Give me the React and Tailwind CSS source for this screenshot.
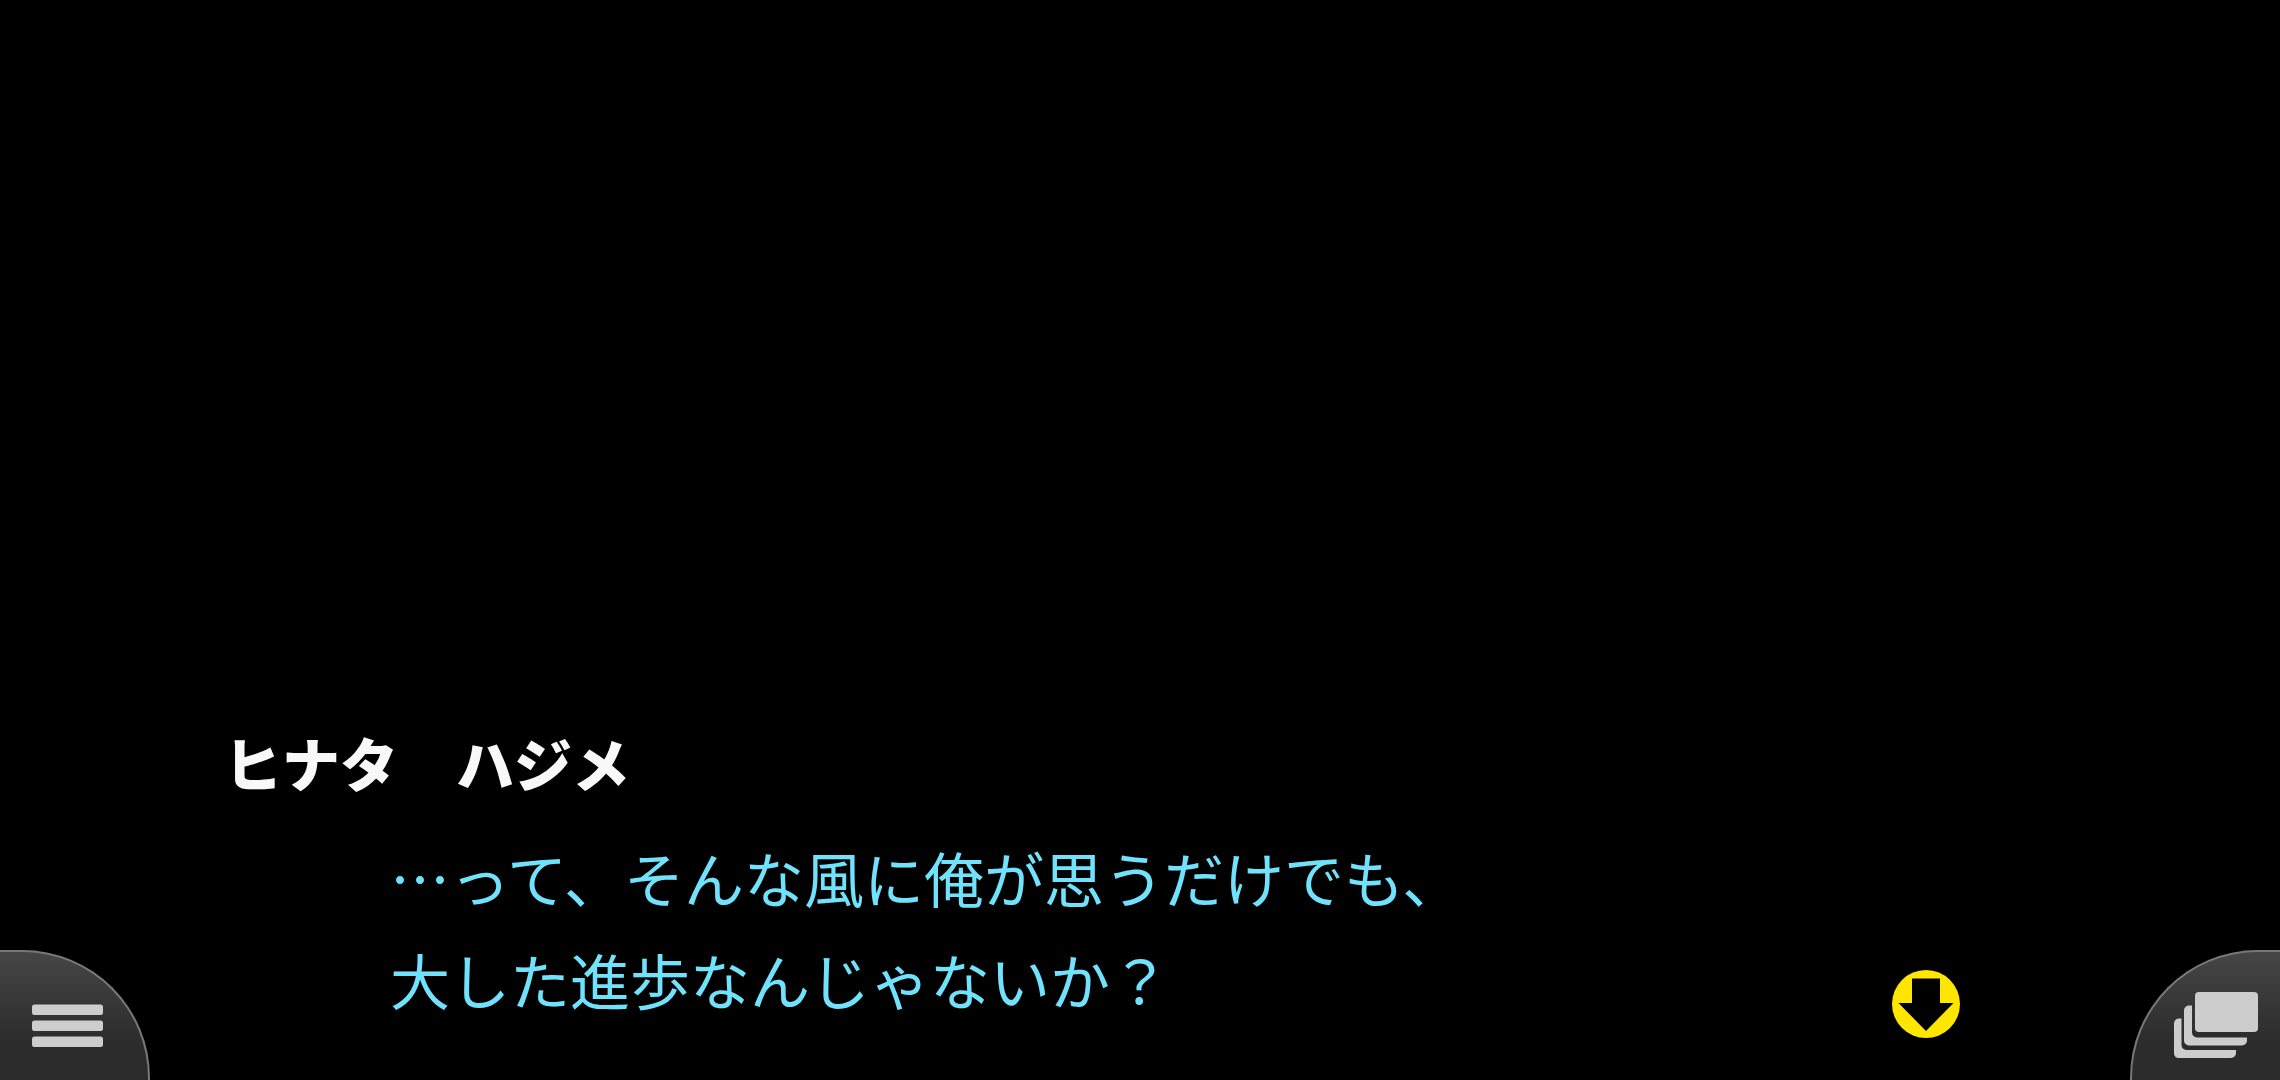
const lines = ['…って、そんな風に俺が思うだけでも、', '大した進歩なんじゃないか？'];

function MenuButton() {
  return (
    <button
      type="button"
      aria-label="メニュー"
      className="flex h-[130px] w-[150px] shrink-0 items-center rounded-tr-[128px] border-t-2 border-r-2 border-[#777979] bg-linear-to-b from-[#464646] to-[#2c2c2c] to-70% pt-5 pl-8"
    >
      <svg width="72" height="44" viewBox="0 0 72 44" fill="#cdcdcd">
        <rect y="0.5" width="71" height="10.5" rx="2.5" />
        <rect y="16.5" width="71" height="10.5" rx="2.5" />
        <rect y="32.5" width="71" height="10.5" rx="2.5" />
      </svg>
    </button>
  );
}

function LogButton() {
  return (
    <button
      type="button"
      aria-label="バックログ"
      className="flex h-[130px] w-[150px] shrink-0 items-center justify-end rounded-tl-[128px] border-t-2 border-l-2 border-[#777979] bg-linear-to-b from-[#464646] to-[#2c2c2c] to-70% pt-[18px] pr-[22px]"
    >
      <svg width="84" height="66" viewBox="0 0 84 66" fill="#cdcdcd">
        <rect x="21" width="63" height="40" rx="4" />
        <path d="M18 13.5h-3a5 5 0 0 0-5 5v30a5 5 0 0 0 5 5h53a5 5 0 0 0 5-5v-3H23a5 5 0 0 1-5-5z" />
        <path d="M7.5 26.500H5a5 5 0 0 0-5 5v30a4.500 4.500 0 0 0 4.500 4.500H57a5 5 0 0 0 5-5v-3H12.500a5 5 0 0 1-5-5z" />
      </svg>
    </button>
  );
}

function NextButton() {
  return (
    <button type="button" aria-label="次へ" className="mr-[170px] mb-[42px] shrink-0">
      <svg width="68" height="68" viewBox="0 0 68 68">
        <circle cx="34" cy="34" r="34" fill="#ffe600" />
        <path d="M20 8.500h28v24.500h13.500L34 61 6.500 33h13.500z" fill="#000" />
      </svg>
    </button>
  );
}

export default function App() {
  return (
    <main
      lang="ja"
      className="flex min-h-screen items-end overflow-hidden bg-black font-['Noto_Sans_CJK_JP',sans-serif]"
    >
      <MenuButton />

      {/* Dialogue */}
      <section className="min-w-0 flex-1 pb-[50px] pl-[74px]">
        <h1 className="mb-4 text-[58px] leading-24 font-black text-[#f8f8f8]">ヒナタ　ハジメ</h1>
        <p className="pl-[166px] text-[60px] leading-[102px] font-normal text-[#70e2fc]">
          {lines.map((line) => (
            <span key={line} className="block">
              {line}
            </span>
          ))}
        </p>
      </section>

      <NextButton />
      <LogButton />
    </main>
  );
}
